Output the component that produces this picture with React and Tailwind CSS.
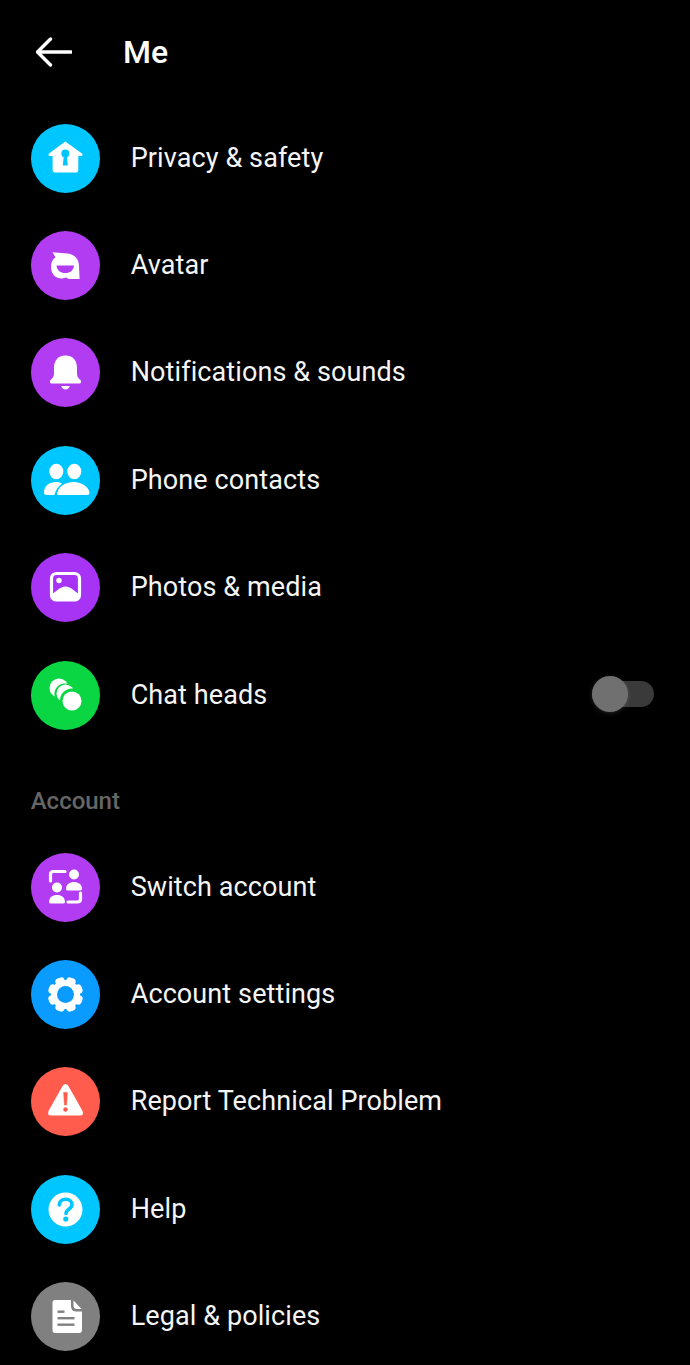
const W = "#fff";
const Svg = ({ children }) => (
  <svg viewBox="0 0 69 69" className="w-[69px] h-[69px]" fill="none">{children}</svg>
);
const icons = {
  privacy: (c) => (
    <Svg>
      <path d="M34.3 17.5 L51 29.5 Q52.5 31.8 50 32 L47.3 32 L47.3 46 Q47.3 48.5 45 48.5 L24 48.5 Q21.6 48.5 21.6 46 L21.6 32 L18.8 32 Q16.5 31.8 18 29.5 Z" fill={W} />
      <circle cx="34.3" cy="29.5" r="4" fill={c} />
      <path d="M32.9 31 L31.8 41.5 L36.8 41.5 L35.7 31 Z" fill={c} />
    </Svg>
  ),
  avatar: (c) => (
    <Svg>
      <path d="M21.5 21.2 L36 22.5 C43.5 23 48 28 48 35 L48.6 48 L38 48 L35 46.5 C27 49.5 20 45 20 35.5 C20 31.5 21.5 28.5 24.5 26.3 Z" fill={W} />
      <path d="M25.5 34.5 L43 34.5 C42.5 39.5 39 42 34.3 42 C29.5 42 26 39.5 25.5 34.5 Z" fill={c} />
    </Svg>
  ),
  bell: () => (
    <Svg>
      <path d="M34.5 17.5 C26.5 17.5 23 23 23 30 L23 36 C23 39 21 41 19 42.5 Q18.5 45.5 20.5 45.5 L48.5 45.5 Q50.5 45.5 50 42.5 C48 41 46 39 46 36 L46 30 C46 23 42.5 17.5 34.5 17.5 Z" fill={W} />
      <path d="M30.2 48 L38.8 48 C38 50.5 36.3 51.5 34.5 51.5 C32.7 51.5 31 50.5 30.2 48 Z" fill={W} />
    </Svg>
  ),
  people: () => (
    <Svg>
      <ellipse cx="25.3" cy="25.5" rx="7" ry="7.8" fill={W} />
      <ellipse cx="43.3" cy="25.5" rx="7" ry="7.8" fill={W} />
      <path d="M13 46.5 C13 40 18.5 36 25 36 C28 36 29.5 36.6 31 37.5 C27.5 40 24.5 44 23.5 49 L15.5 49 Q13 49 13 46.5 Z" fill={W} />
      <path d="M26 49 C26.3 41 34 36 42.5 36 C51 36 58 41 58.5 47 Q58.5 49 56.5 49 Z" fill={W} />
    </Svg>
  ),
  photo: (c) => (
    <Svg>
      <rect x="20.5" y="20.5" width="28" height="26.5" rx="5" stroke={W} strokeWidth="3.2" />
      <circle cx="28" cy="27.5" r="2.7" fill={W} />
      <path d="M21 41 C25 39 29 33.5 34.5 33.5 C40 33.5 44 39 48 41 L48 45 Q48 47.5 45 47.5 L24 47.5 Q21 47.5 21 45 Z" fill={W} />
    </Svg>
  ),
  chat: (c) => (
    <Svg>
      <circle cx="28" cy="27" r="9.5" fill={W} />
      <circle cx="34" cy="33" r="10.6" fill={c} />
      <circle cx="34.5" cy="32.5" r="9" fill={W} />
      <circle cx="41" cy="39.5" r="12" fill={c} />
      <circle cx="41" cy="40" r="9.5" fill={W} />
    </Svg>
  ),
  switch: () => (
    <Svg>
      <path d="M19.5 28 L19.5 21.5 Q19.5 18.5 22.5 18.5 L34 18.5" stroke={W} strokeWidth="3.2" strokeLinecap="round" />
      <path d="M49.5 40 L49.5 46 Q49.5 49 46.5 49 L37 49" stroke={W} strokeWidth="3.2" strokeLinecap="round" />
      <circle cx="43" cy="21.5" r="5" fill={W} />
      <path d="M35 36 C35 31 39 29 43 29 C47 29 51 31 51 36 Q51 37.5 49 37.5 L37 37.5 Q35 37.5 35 36 Z" fill={W} />
      <circle cx="26" cy="34.5" r="5" fill={W} />
      <path d="M18 49 C18 44.5 21.5 42 26 42 C30.5 42 34 44.5 34 49 Q34 50.5 32 50.5 L20 50.5 Q18 50.5 18 49 Z" fill={W} />
    </Svg>
  ),
  gear: (c) => (
    <Svg>
      <g fill={W}>
        {[0, 45, 90, 135, 180, 225, 270, 315].map((a) => (
          <rect key={a} x="29.7" y="16.8" width="9.6" height="10" rx="3.6" transform={`rotate(${a + 22.5} 34.5 34.5)`} />
        ))}
        <circle cx="34.5" cy="34.5" r="14.5" />
      </g>
      <circle cx="34.5" cy="34.5" r="8.5" fill={c} />
    </Svg>
  ),
  warn: (c) => (
    <Svg>
      <path d="M31.6 19 Q34.5 15 37.4 19 L51.5 44 Q53 48.5 49 48.5 L20 48.5 Q16 48.5 17.5 44 Z" fill={W} />
      <path d="M32.6 25.5 L36.4 25.5 L35.6 38 L33.4 38 Z" fill={c} stroke={c} strokeWidth="0.5" strokeLinejoin="round" />
      <circle cx="34.5" cy="42.5" r="2.2" fill={c} />
    </Svg>
  ),
  help: (c) => (
    <Svg>
      <circle cx="34.5" cy="34.5" r="17" fill={W} />
      <path d="M28.3 30 C28.3 26.5 31 24.3 34.7 24.3 C38.5 24.3 41 26.5 41 29.7 C41 34 35 34 35 38.5" stroke={c} strokeWidth="3.6" strokeLinecap="round" />
      <circle cx="34.8" cy="44" r="2.6" fill={c} />
    </Svg>
  ),
  doc: (c) => (
    <Svg>
      <path d="M24 18 L40 18 L40 24 Q40 29.5 45.5 29.5 L51 29.5 L51 48 Q51 51 48 51 L24 51 Q21.5 51 21.5 48 L21.5 20.5 Q21.5 18 24 18 Z" fill={W} />
      <path d="M42.5 18.5 L50.5 27 L46 27 Q42.5 27 42.5 23.5 Z" fill={W} />
      <rect x="26.5" y="28.5" width="7" height="2.4" fill={c} />
      <rect x="26.5" y="35" width="17" height="2.4" fill={c} />
      <rect x="26.5" y="41.5" width="17" height="2.4" fill={c} />
    </Svg>
  ),
};

const Row = ({ icon, color, label, children }) => (
  <div className="flex items-center h-[107.4px] pl-[30.7px] pr-[36px]">
    <div className="w-[69px] h-[69px] rounded-full shrink-0" style={{ backgroundColor: color }}>
      {icons[icon](color)}
    </div>
    <span className="ml-[31px] text-[27px] leading-none text-[#f5f5f5] tracking-[0.1px] flex-1">{label}</span>
    {children}
  </div>
);

const Toggle = () => (
  <div className="relative w-[62px] h-[26px] rounded-full bg-[#3a3a3a] -mt-[2px]">
    <div className="absolute left-0 top-[-5px] w-[36px] h-[36px] rounded-full bg-[#707070] shadow-[0_1px_4px_rgba(255,255,255,0.15)]" />
  </div>
);

export default function App() {
  return (
    <div className="w-[690px] h-[1365px] overflow-hidden bg-black text-white font-['Roboto',sans-serif]">
      <header className="flex items-center h-[104.5px] pb-[1px]">
        <svg viewBox="0 0 36 30" className="ml-[36px] w-[36px] h-[30px]" fill="none">
          <path d="M35 15 L2 15 M14.5 2 L1.5 15 L14.5 28" stroke="#fff" strokeWidth="3.4" strokeLinecap="round" strokeLinejoin="round" />
        </svg>
        <h1 className="ml-[51px] text-[32px] font-medium leading-none">Me</h1>
      </header>
      <Row icon="privacy" color="#00c6ff" label="Privacy & safety" />
      <Row icon="avatar" color="#b13cf2" label="Avatar" />
      <Row icon="bell" color="#b13cf2" label="Notifications & sounds" />
      <Row icon="people" color="#00c6ff" label="Phone contacts" />
      <Row icon="photo" color="#a733f5" label="Photos & media" />
      <Row icon="chat" color="#0ad643" label="Chat heads"><Toggle /></Row>
      <div className="h-[84.6px] pl-[30.7px] pt-[38px] text-[24px] leading-[28px] font-medium text-[#666666]">Account</div>
      <Row icon="switch" color="#b13cf2" label="Switch account" />
      <Row icon="gear" color="#0a9bff" label="Account settings" />
      <Row icon="warn" color="#ff5c4d" label="Report Technical Problem" />
      <Row icon="help" color="#00c6ff" label="Help" />
      <Row icon="doc" color="#808080" label="Legal & policies" />
    </div>
  );
}
